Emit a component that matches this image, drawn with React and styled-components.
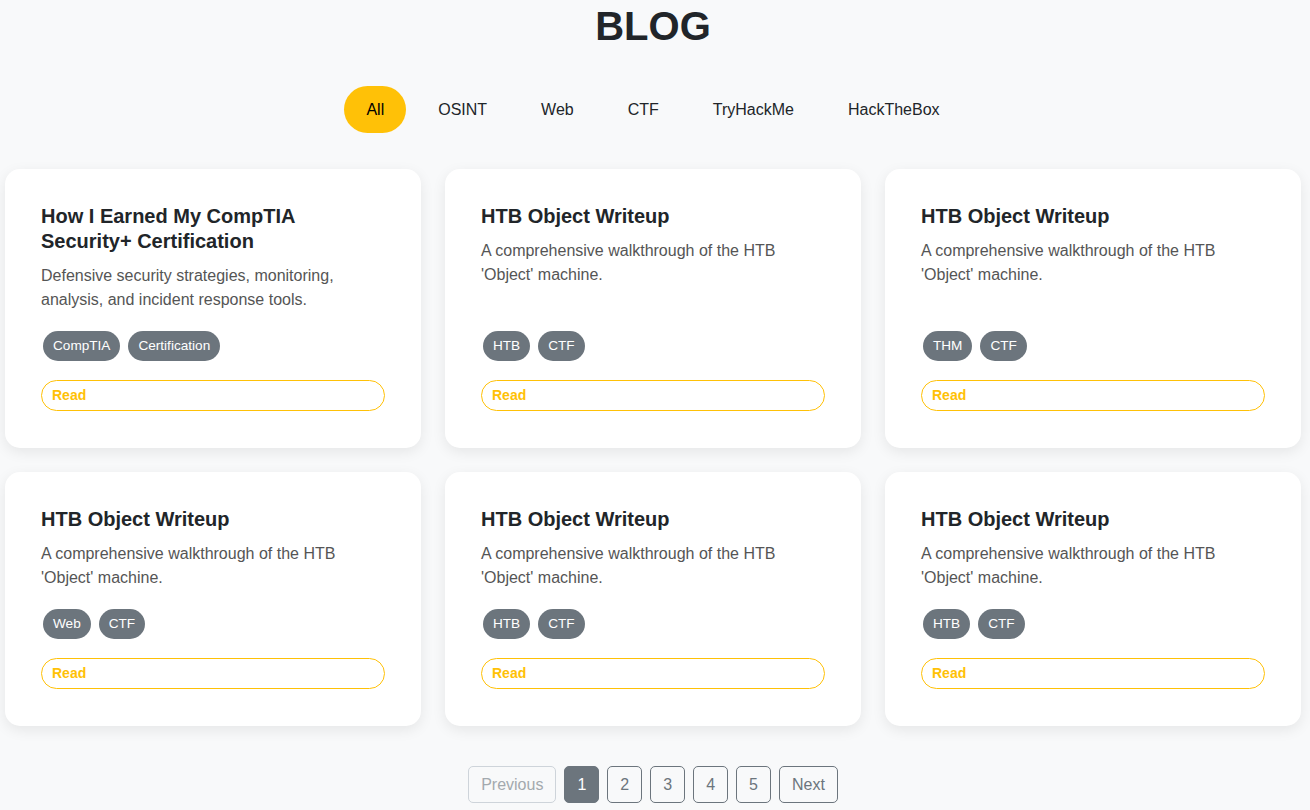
import { useState } from "react";
import styled, { createGlobalStyle, css } from "styled-components";

const GlobalStyle = createGlobalStyle`
  * {
    box-sizing: border-box;
  }

  body {
    margin: 0;
    background-color: #f8f9fa;
    color: #212529;
    font-family: "Liberation Sans", Arial, sans-serif;
  }
`;

const FILTERS = ["All", "OSINT", "Web", "CTF", "TryHackMe", "HackTheBox"];

const HTB_DESC = "A comprehensive walkthrough of the HTB 'Object' machine.";

const POSTS = [
  {
    id: 1,
    title: "How I Earned My CompTIA Security+ Certification",
    description: "Defensive security strategies, monitoring, analysis, and incident response tools.",
    tags: ["CompTIA", "Certification"]
  },
  { id: 2, title: "HTB Object Writeup", description: HTB_DESC, tags: ["HTB", "CTF"] },
  { id: 3, title: "HTB Object Writeup", description: HTB_DESC, tags: ["THM", "CTF"] },
  { id: 4, title: "HTB Object Writeup", description: HTB_DESC, tags: ["Web", "CTF"] },
  { id: 5, title: "HTB Object Writeup", description: HTB_DESC, tags: ["HTB", "CTF"] },
  { id: 6, title: "HTB Object Writeup", description: HTB_DESC, tags: ["HTB", "CTF"] }
];

const App = () => {
  const [filter, setFilter] = useState("All");
  const [page, setPage] = useState(1);

  return (
    <>
      <GlobalStyle />
      <Page>
        <Title>BLOG</Title>
        <FilterBar>
          {FILTERS.map((item) => (
            <FilterButton
              key={item}
              type="button"
              $active={filter === item}
              onClick={() => setFilter(item)}
            >
              {item}
            </FilterButton>
          ))}
        </FilterBar>

        <CardGrid>
          {POSTS.map((post) => (
            <Card key={post.id}>
              <CardTitle>{post.title}</CardTitle>
              <CardText>{post.description}</CardText>
              <TagList>
                {post.tags.map((tag) => (
                  <Tag key={tag}>{tag}</Tag>
                ))}
              </TagList>
              <ReadButton type="button">Read</ReadButton>
            </Card>
          ))}
        </CardGrid>

        <Pagination>
          <PageButton type="button" disabled={page === 1} onClick={() => setPage(page - 1)}>
            Previous
          </PageButton>
          {[1, 2, 3, 4, 5].map((n) => (
            <PageButton key={n} type="button" $active={page === n} onClick={() => setPage(n)}>
              {n}
            </PageButton>
          ))}
          <PageButton type="button" disabled={page === 5} onClick={() => setPage(page + 1)}>
            Next
          </PageButton>
        </Pagination>
      </Page>
    </>
  );
};

export default App;

const Page = styled.div`
  width: 100%;
  padding: 0 9px 20px 5px;
  display: flex;
  flex-flow: column nowrap;
  align-items: center;
`;

const Title = styled.h1`
  margin: 2px 0 36px;
  font-size: 40px;
  line-height: 48px;
  font-weight: 700;
  color: #212529;
`;

const FilterBar = styled.div`
  display: flex;
  gap: 10px;
  margin-bottom: 36px;
`;

const FilterButton = styled.button`
  padding: 12px 22px;
  border: none;
  border-radius: 24px;
  background: transparent;
  font-family: inherit;
  font-size: 16px;
  line-height: 23px;
  color: #212529;
  cursor: pointer;

  ${({ $active }) => $active && css`
    background-color: #ffc107;
    color: #000;
  `}
`;

const CardGrid = styled.div`
  width: 100%;
  display: grid;
  grid-template-columns: repeat(3, 416px);
  gap: 24px;
`;

const Card = styled.div`
  padding: 35px 36px 37px;
  display: flex;
  flex-flow: column nowrap;
  border-radius: 15px;
  background-color: #fff;
  box-shadow: 0 4px 14px rgba(0, 0, 0, 0.08);
`;

const CardTitle = styled.h5`
  margin: 0 0 10px;
  font-size: 20px;
  line-height: 25px;
  font-weight: 700;
  color: #212529;
`;

const CardText = styled.p`
  margin: 0 0 19px;
  font-size: 16px;
  line-height: 24px;
  color: #555;
`;

const TagList = styled.div`
  margin-top: auto;
  margin-bottom: 19px;
  padding-left: 2px;
  display: flex;
  gap: 8px;
`;

const Tag = styled.span`
  padding: 5px 10px;
  border-radius: 15px;
  background-color: #6c757d;
  color: #fff;
  font-size: 13.6px;
  line-height: 20px;
`;

const ReadButton = styled.button`
  width: 100%;
  padding: 5px 10px;
  text-align: left;
  border: 1px solid #ffc107;
  border-radius: 16px;
  background: #fff;
  color: #ffc107;
  font-family: inherit;
  font-size: 14px;
  font-weight: 700;
  line-height: 19px;
  cursor: pointer;
`;

const Pagination = styled.nav`
  margin-top: 40px;
  display: flex;
  gap: 8px;
`;

const PageButton = styled.button`
  padding: 6px 12px;
  border: 1px solid #6c757d;
  border-radius: 5px;
  background: transparent;
  color: #6c757d;
  font-family: inherit;
  font-size: 16px;
  line-height: 23px;
  cursor: pointer;

  &:disabled {
    border-color: #ced4da;
    color: #a3a9ae;
    cursor: default;
  }

  ${({ $active }) => $active && css`
    background-color: #6c757d;
    color: #fff;
  `}
`;
